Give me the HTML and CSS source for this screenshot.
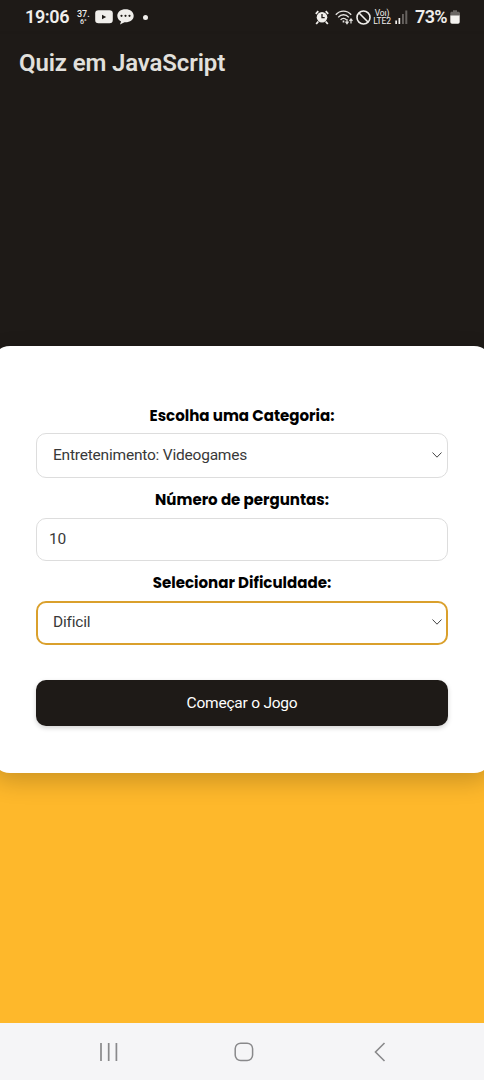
FILE: index.html
```html
<!DOCTYPE html>
<html lang="pt-BR">
<head>
<meta charset="utf-8">
<meta name="viewport" content="width=device-width">
<title>Quiz em JavaScript</title>
<link rel="stylesheet" href="styles.css">
</head>
<body>
<div class="status">
  <span class="clock">19:06</span>
  <span class="temp"><span>37.</span><span class="temp-low">6°</span></span>
  <svg class="video" width="18" height="14" viewBox="0 0 18 14"><rect x=".2" y=".3" width="17.6" height="13" rx="3.3" fill="#f0eeeb"/><path d="M7 4.8v4.400l4.200-2.200z" fill="#1e1a17"/></svg>
  <svg class="chat" width="17" height="16" viewBox="0 0 17 16"><path d="M8.5.3C3.8.3.3 3 .3 6.8c0 2.6 1.6 4.6 3.8 5.6L3 15.4l4.5-2.1c5.4.3 9.2-2.4 9.2-6.5C16.700 3 13.200.3 8.500.3z" fill="#f0eeeb"/><circle cx="4.500" cy="6.800" r="1.100" fill="#1e1a17"/><circle cx="8.500" cy="6.800" r="1.100" fill="#1e1a17"/><circle cx="12.500" cy="6.800" r="1.100" fill="#1e1a17"/></svg>
  <i class="dot"></i>
  <svg class="alarm" width="14" height="15" viewBox="0 0 14 15"><circle cx="7" cy="7.300" r="5.300" fill="#f0eeeb"/><path d="M.8 3.800 3.300 1.200M13.200 3.800 10.700 1.200M3.300 11.500 1.200 14M10.700 11.500l2.100 2.500" stroke="#f0eeeb" stroke-width="1.800"/><path d="M7 4v3.700h2.700" fill="none" stroke="#1e1a17" stroke-width="1.300"/></svg>
  <svg class="wifi" width="19" height="15" viewBox="0 0 19 15" fill="none" stroke="#e5e3e0"><path d="M.8 4.700C5-.1 12-.1 16.200 4.700M3.200 7.400c3-3.500 7.700-3.500 10.600 0M5.600 9.900c1.700-2 4.200-2 5.900 0" stroke-width="1.400"/><path d="M8.500 10.500v2" stroke-width="1.700"/><path d="M12 9v4.500m-1.500-1.800 1.500 2 1.500-2M16 13.500V9m-1.500 1.900L16 9l1.500 1.900" stroke-width="1.200"/></svg>
  <svg class="block" width="15" height="15" viewBox="0 0 15 15" fill="none" stroke="#f0eeeb" stroke-width="1.600"><circle cx="7.500" cy="7.500" r="6.500"/><path d="m3 3 9 9"/></svg>
  <span class="lte"><span>Voı)</span><span>LTE2</span></span>
  <svg class="signal" width="13" height="14" viewBox="0 0 13 14"><path d="M.3 10.500h1.700V14H.3zM3.500 8h1.700v6H3.500z" fill="#f0eeeb"/><path d="M7 4h1.900v10H7zM10.300.5h2V14h-2z" fill="#66625f"/></svg>
  <span class="percent">73%</span>
  <svg class="battery" width="10" height="14" viewBox="0 0 10 14"><path d="M3 .2h4v1.500h2L10 3v3H.3V3L1 1.700h2z" fill="#6b6764"/><path d="M.3 5.500h9.400V12q0 1.700-1.700 1.700H2Q.3 13.700.3 12z" fill="#f5f3f0"/></svg>
</div>
<header class="header"><h1>Quiz em JavaScript</h1></header>
<main class="main">
  <form class="card">
    <label class="label category">Escolha uma Categoria:</label>
    <div class="field select"><span>Entretenimento: Videogames</span><svg width="10" height="6" viewBox="0 0 10 6"><path d="m.5.5 4.500 4.700L9.500.5" fill="none" stroke="#444" stroke-width="1"/></svg></div>
    <label class="label number">Número de perguntas:</label>
    <div class="field input"><span>10</span></div>
    <label class="label difficulty">Selecionar Dificuldade:</label>
    <div class="field select focused"><span>Dificil</span><svg width="10" height="6" viewBox="0 0 10 6"><path d="m.5.5 4.500 4.700L9.500.5" fill="none" stroke="#444" stroke-width="1"/></svg></div>
    <button class="start" type="button">Começar o Jogo</button>
  </form>
</main>
<nav class="nav">
  <svg width="18" height="18" viewBox="0 0 18 18" stroke="#89898b" stroke-width="1.700"><path d="M1 0v18M8.700 0v18M16.400 0v18"/></svg>
  <svg class="home" width="20" height="20" viewBox="0 0 20 20"><rect x="1.200" y="1.200" width="17.400" height="17.400" rx="5.500" fill="none" stroke="#89898b" stroke-width="1.500"/></svg>
  <svg width="12" height="20" viewBox="0 0 12 20"><path d="M10.500 1 1.500 10l9 9" fill="none" stroke="#89898b" stroke-width="1.600"/></svg>
</nav>
</body>
</html>
```
FILE: styles.css
```css
* { box-sizing: border-box; }
body {
  margin: 0;
  height: 1080px;
  display: flex;
  flex-direction: column;
  overflow: hidden;
  font-family: Roboto, sans-serif;
  background: #1e1a17;
}
svg { display: block; flex: none; }
.status {
  height: 34px;
  padding-left: 25px;
  display: flex;
  align-items: center;
  color: #f0eeeb;
  white-space: nowrap;
}
.clock { width: 52px; font-size: 18px; font-weight: 600; line-height: 32px; letter-spacing: -.4px; padding-bottom: 1px; }
.temp { width: 18px; height: 17px; padding-top: 1px; font-size: 9px; line-height: 9px; font-weight: 500; display: flex; flex-direction: column; }
.temp-low { padding-left: 3px; font-size: 7px; line-height: 7px; }
.chat { margin-left: 4px; }
.dot { width: 5px; height: 5px; border-radius: 50%; background: #f0eeeb; margin-left: 9px; }
.alarm { margin-left: 167px; }
.wifi { margin-left: 6px; }
.block { margin-left: 2px; }
.lte { width: 20px; margin-left: 1px; display: flex; flex-direction: column; align-items: center; font-size: 8.500px; line-height: 8px; font-weight: 400; letter-spacing: -.1px; }
.signal { margin-left: 3px; }
.percent { width: 34px; margin-left: 7px; font-size: 18px; font-weight: 600; letter-spacing: -.6px; padding-bottom: 1px; }
.battery { margin-left: 1px; }
.header {
  height: 62px;
  padding: 9px 19px;
  box-shadow: 0 2px 5px rgba(0, 0, 0, .15);
}
.header h1 { margin: 0; color: #e2e0dc; font-size: 24px; line-height: 40px; font-weight: 600; letter-spacing: -.13px; white-space: nowrap; }
.main {
  flex: 1;
  padding-top: 250px;
  background: linear-gradient(#1e1a17 0 464px, #feb82b 464px);
}
.card {
  height: 427px;
  margin: 0 -8px;
  padding: 60px 44px 46px;
  display: flex;
  flex-direction: column;
  border-radius: 18px;
  background: #fff;
  box-shadow: 0 8px 24px rgba(0, 0, 0, .2);
}
.label {
  height: 27px;
  font: 700 15.050px/20px Poppins, Inter, sans-serif;
  color: #000;
  text-align: center;
  white-space: nowrap;
}
.difficulty { height: 27.5px; }
.field {
  height: 45px;
  margin-bottom: 12px;
  padding: 0 5px 2px 16px;
  display: flex;
  align-items: center;
  justify-content: space-between;
  border: 1px solid #ddd;
  border-radius: 10px;
  color: #393939;
  font-size: 15.500px;
  letter-spacing: -.21px;
}
.input { height: 43.5px; margin-top: .5px; padding: 0 12px 1px; }
.focused { height: 44px; margin: 0; padding: 0 4px 1px 15px; border: 2.500px solid #daa02c; }
.start {
  height: 46px;
  margin-top: 35.500px;
  border: 0;
  border-radius: 10px;
  background: #1e1a17;
  color: #fff;
  font: 400 15.500px Roboto, sans-serif;
  letter-spacing: -.22px;
  box-shadow: 0 2px 5px rgba(0, 0, 0, .18);
}
.nav {
  height: 57px;
  padding: 0 98px 0 99.500px;
  display: flex;
  align-items: center;
  justify-content: space-between;
  background: #f5f5f7;
}
.home { margin-right: 3px; }
```
